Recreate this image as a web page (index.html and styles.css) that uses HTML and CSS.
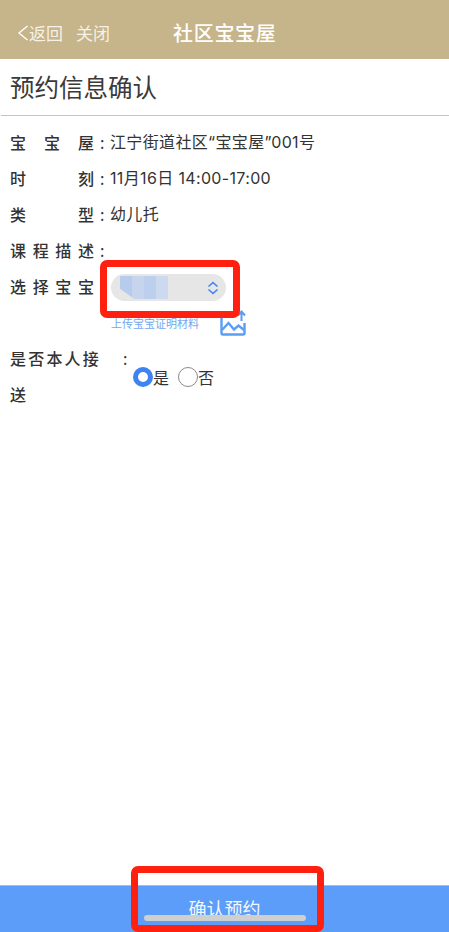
FILE: index.html
```html
<!DOCTYPE html>
<html lang="zh-CN">
<head>
<meta charset="utf-8">
<title>社区宝宝屋</title>
<link rel="stylesheet" href="styles.css">
</head>
<body>
<div class="page">
  <header class="topbar">
    <div class="nav">
      <svg class="back" viewBox="0 0 12 16" width="12" height="16"><path d="M10.500 1 L2 8 L10.500 15" fill="none" stroke="#fff" stroke-width="1.400"/></svg>
      <span>返回</span><span class="close">关闭</span>
    </div>
    <div class="title">社区宝宝屋</div>
  </header>
  <h1 class="heading">预约信息确认</h1>
  <main class="form">
    <div class="row"><span class="label">宝 宝 屋</span><span class="colon">:</span><span class="value">江宁街道社区“宝宝屋”001号</span></div>
    <div class="row"><span class="label">时 刻</span><span class="colon">:</span><span class="value">11月16日 14:00-17:00</span></div>
    <div class="row"><span class="label">类 型</span><span class="colon">:</span><span class="value">幼儿托</span></div>
    <div class="row"><span class="label">课 程 描 述</span><span class="colon">:</span></div>
    <div class="row">
      <span class="label">选 择 宝 宝</span>
      <div class="picker">
        <div class="select">
          <div class="mosaic"><i></i><i></i><i></i><i></i></div>
          <svg class="updown" viewBox="0 0 12 14" width="12" height="14"><path d="M1.500 5.500 L6 1.500 L10.500 5.500 M1.500 8.500 L6 12.500 L10.500 8.500" fill="none" stroke="#3f84f0" stroke-width="1.600"/></svg>
        </div>
        <div class="upload">
          <span>上传宝宝证明材料</span>
          <svg class="upicon" viewBox="0 0 26 26" width="26" height="26"><path d="M14 6 H3 Q1.500 6 1.500 7.500 V23 Q1.500 24.500 3 24.500 H23 Q24.500 24.500 24.500 23 V13" fill="none" stroke="#5b9df5" stroke-width="2.400"/><path d="M2 20 L8.500 13 L14 19.500 L18.500 15.500 L24 20" fill="none" stroke="#5b9df5" stroke-width="2.400"/><path d="M21.500 11 V2 M18 5.500 L21.500 1.500 L25 5.500" fill="none" stroke="#5b9df5" stroke-width="2"/></svg>
        </div>
        <div class="mark mark-select"></div>
      </div>
    </div>
    <div class="row pickup">
      <span class="long">是否本人接送</span>
      <span class="colon long-colon">:</span>
      <div class="radios">
        <span class="radio on"></span><span class="rtext">是</span>
        <span class="radio off"></span><span class="rtext">否</span>
      </div>
    </div>
  </main>
  <footer class="footer">
    <span>确认预约</span>
    <div class="indicator"></div>
    <div class="mark mark-button"></div>
  </footer>
</div>
</body>
</html>
```

FILE: styles.css
```css
* { box-sizing: border-box; }
html, body { margin: 0; padding: 0; background: #fff; }
body { font-family: "Noto Sans CJK SC", "Noto Sans", sans-serif; color: #333; }
.page { width: 449px; height: 932px; display: flex; flex-direction: column; overflow: hidden; }

.topbar { height: 59px; background: #c6b48a; color: #fff; display: flex; align-items: center; padding: 6px 0 0 17px; flex: none; }
.nav { display: flex; align-items: center; font-size: 17px; width: 156px; color: #f6f1e6; }
.close { margin-left: 13px; }
.title { font-size: 20px; font-weight: 500; letter-spacing: 0.7px; }

.heading { margin: 0 0 0 1px; height: 57px; flex: none; padding: 0 0 0 9px; font-size: 24.500px; font-weight: 400; line-height: 55px; color: #3a3a3a; border-bottom: 1px solid #c4c4c4; }

.form { flex: 1; padding: 8px 0 0 10px; }
.row { display: flex; align-items: flex-start; line-height: 36px; min-height: 36px; }
.label { width: 84px; font-size: 16px; font-weight: 500; text-align: justify; text-align-last: justify; flex: none; color: #333; }
.colon { width: 16px; padding-left: 6px; font-size: 16px; flex: none; }
.value { font-family: Inter, "Noto Sans CJK SC", sans-serif; font-size: 16px; letter-spacing: 0.35px; color: #333; }

.picker { position: relative; margin-left: 17px; width: 135px; }
.select { width: 115px; height: 27px; margin-top: 6px; border-radius: 14px; background: #e6e6e6; display: flex; align-items: center; justify-content: space-between; padding: 0 7px 0 9px; }
.mosaic { width: 48px; height: 23px; display: grid; grid-template-columns: repeat(4, 1fr); clip-path: polygon(0 0, 100% 0, 100% 100%, 30% 100%, 0 55%); }
.mosaic i:nth-child(1) { background: #b7cbec; }
.mosaic i:nth-child(2) { background: #c6d4ee; }
.mosaic i:nth-child(3) { background: #bccfed; }
.mosaic i:nth-child(4) { background: #ccd9ee; }
.updown { display: block; }
.upload { display: flex; align-items: center; justify-content: space-between; height: 24px; margin-top: 10px; font-size: 11px; line-height: 24px; color: #72a8ee; width: 135px; }

.mark { position: absolute; border: 7px solid #ff2010; border-radius: 7px; }
.mark-select { left: -11px; top: -8px; width: 140px; height: 58px; }

.pickup { margin-top: 5px; }
.long { width: 92px; flex: none; font-size: 16px; font-weight: 500; letter-spacing: 2.200px; }
.long-colon { width: 31px; padding-left: 21px; }
.radios { display: flex; align-items: center; margin-top: 27px; font-size: 16px; height: 20px; line-height: 20px; }
.radio { width: 20px; height: 20px; border-radius: 50%; display: block; flex: none; }
.radio.on { border: 5.500px solid #3f82f2; background: #fff; }
.radio.off { border: 1.600px solid #8a8a8a; background: #fff; margin-left: 9px; }
.rtext { color: #333; }

.footer { position: relative; height: 47px; flex: none; background: #5b9df8; border-top: 1px solid #b9bbbb; color: #f3f7ff; font-size: 18px; text-align: center; line-height: 44px; }
.footer span { display: block; }
.indicator { position: absolute; left: 144px; top: 29px; width: 162px; height: 6px; border-radius: 3px; background: #cfcfcf; }
.mark-button { left: 131px; top: -20px; width: 193px; height: 66px; }
```
